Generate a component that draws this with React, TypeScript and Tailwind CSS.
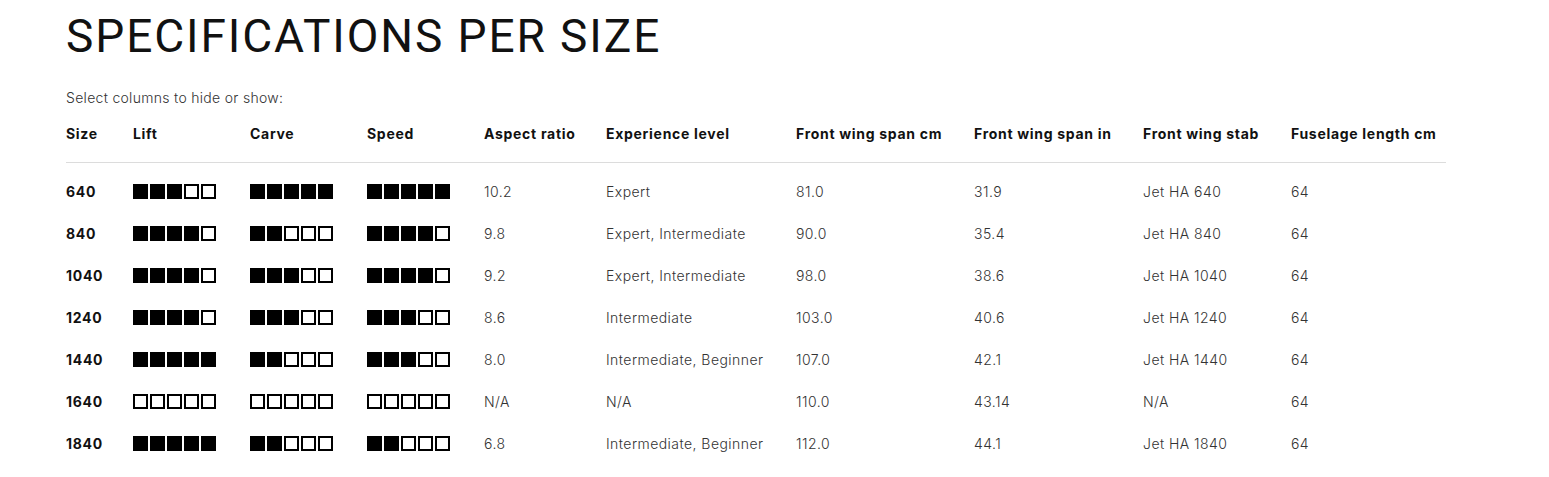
import React from "react";

type Row = {
  size: string;
  lift: number;
  carve: number;
  speed: number;
  aspect: string;
  level: string;
  spanCm: string;
  spanIn: string;
  stab: string;
  fuselage: string;
};

const rows: Row[] = [
  { size: "640", lift: 3, carve: 5, speed: 5, aspect: "10.2", level: "Expert", spanCm: "81.0", spanIn: "31.9", stab: "Jet HA 640", fuselage: "64" },
  { size: "840", lift: 4, carve: 2, speed: 4, aspect: "9.8", level: "Expert, Intermediate", spanCm: "90.0", spanIn: "35.4", stab: "Jet HA 840", fuselage: "64" },
  { size: "1040", lift: 4, carve: 3, speed: 4, aspect: "9.2", level: "Expert, Intermediate", spanCm: "98.0", spanIn: "38.6", stab: "Jet HA 1040", fuselage: "64" },
  { size: "1240", lift: 4, carve: 3, speed: 3, aspect: "8.6", level: "Intermediate", spanCm: "103.0", spanIn: "40.6", stab: "Jet HA 1240", fuselage: "64" },
  { size: "1440", lift: 5, carve: 2, speed: 3, aspect: "8.0", level: "Intermediate, Beginner", spanCm: "107.0", spanIn: "42.1", stab: "Jet HA 1440", fuselage: "64" },
  { size: "1640", lift: 0, carve: 0, speed: 0, aspect: "N/A", level: "N/A", spanCm: "110.0", spanIn: "43.14", stab: "N/A", fuselage: "64" },
  { size: "1840", lift: 5, carve: 2, speed: 2, aspect: "6.8", level: "Intermediate, Beginner", spanCm: "112.0", spanIn: "44.1", stab: "Jet HA 1840", fuselage: "64" },
];

const headers = [
  "Size",
  "Lift",
  "Carve",
  "Speed",
  "Aspect ratio",
  "Experience level",
  "Front wing span cm",
  "Front wing span in",
  "Front wing stab",
  "Fuselage length cm",
];

const widths = ["67px", "117px", "117px", "117px", "122px", "190px", "178px", "169px", "148px", "155px"];

function Rating({ value }: { value: number }) {
  return (
    <div className="flex gap-[2px]">
      {[0, 1, 2, 3, 4].map((i) =>
        i < value ? (
          <span key={i} className="block w-[15px] h-[15px] bg-black" />
        ) : (
          <span key={i} className="block w-[15px] h-[15px] border-2 border-black" />
        )
      )}
    </div>
  );
}

export default function App() {
  return (
    <div className="w-[1549px] h-[477px] bg-white pl-[66px] font-['Inter',sans-serif] text-[#222]">
      {/* title */}
      <h1 className="pt-[13px] text-[46px] leading-[46px] font-normal text-[#111] font-['Roboto',sans-serif] tracking-[1.9px]">
        SPECIFICATIONS PER SIZE
      </h1>

      <p className="mt-[29px] text-[14px] leading-[20px] font-light text-[#333] tracking-[0.3px]">
        Select columns to hide or show:
      </p>

      <table className="table-fixed border-collapse w-[1380px]">
        <colgroup>
          {widths.map((w, i) => (
            <col key={i} style={{ width: w }} />
          ))}
        </colgroup>
        <thead>
          <tr className="border-b border-[#dcdcdc]">
            {headers.map((h) => (
              <th key={h} className="text-left pt-[16px] pb-[18px] text-[14px] leading-[20px] font-bold text-[#111] whitespace-nowrap tracking-[0.7px]">
                {h}
              </th>
            ))}
          </tr>
        </thead>
        <tbody>
          <tr>
            <td colSpan={10} className="h-[8px] p-0" />
          </tr>
          {rows.map((r) => (
            <tr key={r.size} className="h-[42px] text-[14px] leading-[20px] font-light text-[#333] tracking-[0.45px]">
              <td className="font-bold text-[#111] tracking-[0.7px]">{r.size}</td>
              <td><Rating value={r.lift} /></td>
              <td><Rating value={r.carve} /></td>
              <td><Rating value={r.speed} /></td>
              <td>{r.aspect}</td>
              <td className="whitespace-nowrap">{r.level}</td>
              <td>{r.spanCm}</td>
              <td>{r.spanIn}</td>
              <td>{r.stab}</td>
              <td>{r.fuselage}</td>
            </tr>
          ))}
        </tbody>
      </table>
    </div>
  );
}
